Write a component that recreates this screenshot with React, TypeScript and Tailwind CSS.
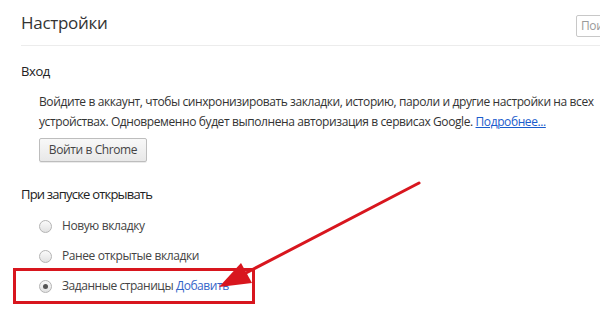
export default function App() {
  const options = [
    { label: "Новую вкладку", checked: false },
    { label: "Ранее открытые вкладки", checked: false },
  ];

  return (
    <div className="relative w-[600px] h-[309px] overflow-hidden bg-white font-['Open_Sans',sans-serif] text-[#303030]">
      {/* header */}
      <div className="ml-[21px] h-[46px] flex items-start border-b border-[#ececec] overflow-hidden">
        <h1 className="mt-[10px] text-[17px] leading-[26px] tracking-[-0.3px] text-[#333] font-normal">Настройки</h1>
        <div className="ml-auto mt-[15px] -mr-[40px] w-[64px] h-[22px] shrink-0 border border-[#c8c8c8] rounded-[2px] pl-[4px] text-[12px] leading-[20px] tracking-[-0.4px] text-[#9a9a9a] overflow-hidden whitespace-nowrap">
          Поиск
        </div>
      </div>

      {/* sign in */}
      <section className="ml-[21px] mt-[16px]">
        <h3 className="text-[13px] leading-[18px] tracking-[-0.4px] text-[#222]">Вход</h3>
        <div className="ml-[18px] mt-[12px] text-[12px] leading-[20px] tracking-[-0.4px] text-[#333]">
          <p className="whitespace-nowrap">
            Войдите в аккаунт, чтобы синхронизировать закладки, историю, пароли и другие настройки на всех
            <br />
            устройствах. Одновременно будет выполнена авторизация в сервисах Google.{" "}
            <span className="text-[#1a5ccc] underline">Подробнее...</span>
          </p>
          <button className="mt-[6px] h-[24px] w-[108px] rounded-[2px] border border-[#bdbdbd] bg-gradient-to-b from-[#f8f8f8] to-[#e8e8e8] text-[12px] tracking-[-0.4px] text-[#444] shadow-[0_1px_0_rgba(0,0,0,0.08)]">
            Войти в Chrome
          </button>
        </div>
      </section>

      {/* on startup */}
      <section className="ml-[21px] mt-[23px]">
        <h3 className="text-[13px] leading-[18px] tracking-[-0.8px] text-[#222]">При запуске открывать</h3>
        <div className="mt-[8px] flex flex-col">
          {options.map((o) => (
            <div key={o.label} className="h-[30px] flex items-center pl-[18px] gap-[10px] text-[12px] tracking-[-0.4px] text-[#444]">
              <Radio checked={o.checked} />
              <span>{o.label}</span>
            </div>
          ))}
          <div className="-ml-[8px] -mt-[3px] w-[242px] h-[36px] border-[3px] border-[#d8161e] flex items-center pl-[23px] gap-[10px] text-[12px] tracking-[-0.45px] text-[#444]">
            <Radio checked />
            <span>
              Заданные страницы <span className="text-[#3464c8]">Добавить</span>
            </span>
          </div>
        </div>
      </section>

      {/* annotation arrow */}
      <svg className="absolute left-0 top-0 pointer-events-none" width="600" height="309" viewBox="0 0 600 309">
        <line x1="419" y1="183" x2="244" y2="274" stroke="#d8161e" strokeWidth="3" strokeLinecap="round" />
        <polygon points="219,287 241,263 252,283" fill="#d8161e" />
      </svg>
    </div>
  );
}

function Radio({ checked }: { checked?: boolean }) {
  return (
    <span className="w-[13px] h-[13px] shrink-0 rounded-full border border-[#b4b4b4] bg-gradient-to-b from-[#fafafa] to-[#e2e2e2] flex items-center justify-center">
      {checked && <span className="w-[5px] h-[5px] rounded-full bg-[#555]" />}
    </span>
  );
}
